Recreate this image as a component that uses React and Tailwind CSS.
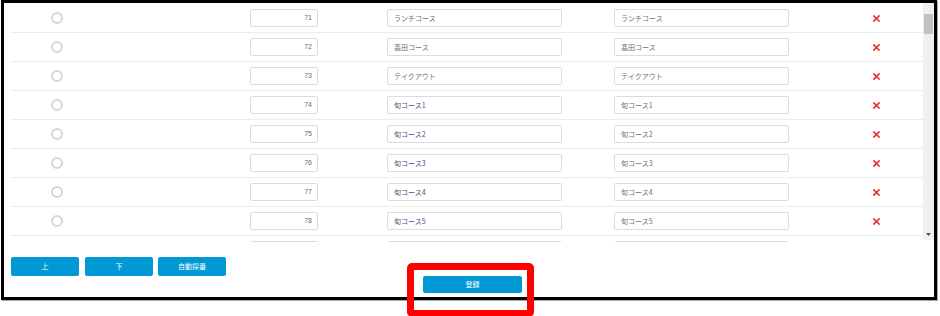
import React from "react";

const rows = [
  ["71", "ランチコース", "ランチコース", false],
  ["72", "髙田コース", "髙田コース", false],
  ["73", "テイクアウト", "テイクアウト", false],
  ["74", "旬コース1", "旬コース1", true],
  ["75", "旬コース2", "旬コース2", true],
  ["76", "旬コース3", "旬コース3", true],
  ["77", "旬コース4", "旬コース4", true],
  ["78", "旬コース5", "旬コース5", true],
  ["", "", "", true],
];

function XIcon() {
  return (
    <svg width="7" height="7" viewBox="0 0 7 7">
      <path d="M1 1 L6 6 M6 1 L1 6" stroke="#e8302c" strokeWidth="1.7" strokeLinecap="square" />
    </svg>
  );
}

function Row({ num, a, b, blue }) {
  return (
    <div className="h-[29px] border-b border-[#ececec] flex items-center">
      <div className="w-[92px] flex justify-center">
        <div className="w-[12px] h-[12px] rounded-full border-2 border-[#d6d6d6] bg-white" />
      </div>
      <div className="ml-[147px] w-[68px] h-[18px] border border-[#dcdcdc] rounded-[2px] bg-white flex items-center justify-end pr-[5px] text-[7px] text-[#6a6a78] font-['Liberation_Sans',sans-serif]">
        {num}
      </div>
      <div className={`ml-[69px] w-[175px] h-[18px] border border-[#dcdcdc] rounded-[2px] bg-white flex items-center pl-[6px] text-[7px] ${blue ? "text-[#3f5680]" : "text-[#707070]"}`}>
        {a}
      </div>
      <div className="ml-[52px] w-[175px] h-[18px] border border-[#dcdcdc] rounded-[2px] bg-white flex items-center pl-[6px] text-[7px] text-[#707070]">
        {b}
      </div>
      <div className="ml-[84px] w-[7px] flex items-center">
        {num ? <XIcon /> : null}
      </div>
    </div>
  );
}

export default function App() {
  return (
    <div className="relative w-[940px] h-[316px] bg-white overflow-hidden font-['Noto_Sans_CJK_JP',sans-serif]">
      <div className="ml-[1px] w-[936px] h-[300px] border-[3px] border-black shadow-[1px_1px_0_#a8a8a8] flex flex-col">
        <div className="flex h-[239px] overflow-hidden">
          <div className="flex-1 pt-[1px] pl-[7px] overflow-hidden">
            {rows.map((r, i) => (
              <Row key={i} num={r[0]} a={r[1]} b={r[2]} blue={r[3]} />
            ))}
          </div>
          <div className="w-[11px] h-[237px] bg-[#f0f0f0] flex flex-col items-center">
            <div className="mt-[11px] w-[9px] h-[20px] bg-[#c1c1c1]" />
            <div className="flex-1" />
            <svg width="5" height="3" viewBox="0 0 5 3" className="mb-[4px]">
              <path d="M0 0 H5 L2.5 3 Z" fill="#505050" />
            </svg>
          </div>
        </div>
        <div className="pt-[15px] pl-[7px] flex">
          <button className="w-[68px] h-[19px] bg-[#0099d6] rounded-[2px] text-white text-[7px] flex items-center justify-center">上</button>
          <button className="ml-[6px] w-[68px] h-[19px] bg-[#0099d6] rounded-[2px] text-white text-[7px] flex items-center justify-center">下</button>
          <button className="ml-[5px] w-[68px] h-[19px] bg-[#0099d6] rounded-[2px] text-white text-[7px] flex items-center justify-center">自動採番</button>
        </div>
        <div className="pl-[419px]">
          <button className="w-[99px] h-[17px] bg-[#0099d6] rounded-[2px] text-white text-[7px] flex items-center justify-center">登録</button>
        </div>
      </div>
      <div className="absolute left-[407px] top-[263px] w-[127px] h-[54px] border-[7px] border-[#ff0000] rounded-[5px]" />
    </div>
  );
}
